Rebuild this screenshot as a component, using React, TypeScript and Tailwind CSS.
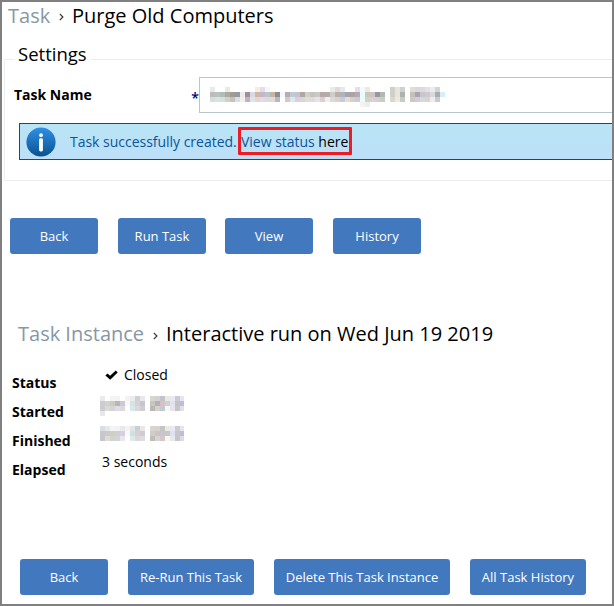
import type { ReactNode } from "react";

// Each row lists hex colours for consecutive 5px cells; "." is an empty cell.
const nameRows = [
  "e6ebea . . e8eae6 . . . . . f8ecdf e4dde8 f0f8fa . . . . . . . . . . . . e8ebe8 dcdcda e6eae8 . . eedce4 f2fcff e8ebe0 . . . . d0d0c8 e6e6e0 cfcfd4 . e0deda d8dad8 dcdae0 e4e2e0 ecebf0 d4d4d8",
  "bcbcbc b8c4b8 b0bcb8 aeaaa0 a09c94 949aa4 f0eaea 9c90a0 dcd8e0 ccb8a4 c4b8c8 b4c8d0 c8b4a0 8c8c92 f0faff bca8b0 b8ccd4 ccc0d0 b0a8a0 d0d0c4 c4c4bc c8c8c8 b8a8ac b0acb0 d0cccc c0b0a4 acb4c4 a8a4ac a8a4a8 b8a8b0 e8fcff c8ccac d0c0d0 989c90 b0b8b8 . d0d0c8 e8e4d8 a8b4b0 . c4c0bc a8a4b0 c8c4d0 d0c8c4 d8d8e0 a8b0a4 d8ecff",
  "d4dedc d6e4e2 d6e0de d0d0c8 c4c4be d8e0e2 f4f0e8 bcb4c0 e0e4e4 e0d8cc e8d8e4 dedad8 dedcd8 b8b8bc . d4c8cc dce8ea d8d0dc d4d8dc e0ded4 dcdce0 e4e4e0 d8d0d4 f0f0e8 e0d8d8 dcd0cc c8ccd8 e8dcd0 d4d0d0 cccacc e8fcff d0d4b8 dcd0d8 d0d4c8 c8ccc8 . d8d8d0 eeeae0 c4ccc8 . ccc8c4 d4ccd4 d0dcd4 e0d0d0 eeeef2 c8ccc8",
  ". . . . . . . . . . . . . . . . . . . . . . . . . . . . . . f6f2f0 eaeef0",
];
const startedRows = [
  "e8eaee . f4f4f4 f0f4f4 . f8f2ee e8eef0 d0d0d2 e8e8ea . d8d4ce d4d2d0 c4c4c8 e8ecdc e8e8f6 cccccc e4e4f2",
  "cccdd2 d0d2ce ccccba b4b8b6 ccc8d4 f6faf8 d4e4e4 d8d0d4 c8c4d0 . c8c4c0 b4b0b8 d8c0c4 d0d0dc e4e4e8 c4c0cc c4bcd4",
  "cccccc d8dcd2 d4d4d8 e0dce0 dcd8e0 . d8e8e8 dcd8d4 d0ccd4 . b8b8b4 d4d0cc c8c8d4 f4fcf0 e8e4ec c8c4c8 e0e0e8",
  "e8e8e8",
];
const finishedRows = [
  "dcdce4 e8e8e8 f2f6f6 f2f2f0 e8e8f2 f8f2ea dce8e8 d0ccd0 e8e8ec . d8d4ce d8d2d0 c4c4c8 e8ecdc e8e8f6 cccccc e4e4f2",
  "c8c8ca c8ccd0 d0d0c2 d0d0d2 d8d0e0 f6faf8 d0e0e2 d8d0d4 d0ccd4 . d0ccc8 c8c4c8 c8c4d0 c8c8c8 e0e0f0 c8c4d0 c4bcd4",
  "c4c8cc e4dcd4 d0d4d2 d4d4d2 ece4ee . dceae8 dcd8d4 e0dce4 . c0bcbc d8d4d0 d4c8c8 f4fcf0 e8e8f0 c8c4c8 dcdce4",
];

function Mosaic({ rows, width, className = "" }: { rows: string[]; width: number; className?: string }) {
  return (
    <svg width={width} height={rows.length * 5} className={`shrink-0 ${className}`} shapeRendering="crispEdges" aria-hidden="true">
      {rows.flatMap((row, y) =>
        row.split(" ").map((c, x) => (c === "." ? null : <rect key={`${x}-${y}`} x={x * 5} y={y * 5} width="5" height="5" fill={`#${c}`} />)),
      )}
    </svg>
  );
}

function Button({ children, className }: { children: ReactNode; className: string }) {
  return (
    <button className={`h-9 shrink-0 rounded-[3px] bg-[#4278be] pt-[2px] text-[13px] whitespace-nowrap text-white ${className}`}>{children}</button>
  );
}

function Chevron({ className = "" }: { className?: string }) {
  return (
    <svg width="5" height="8" viewBox="0 0 5 8" fill="none" stroke="#333" strokeWidth="1.2" className={`shrink-0 ${className}`}>
      <path d="M.8.8 3.9 4 .8 7.2" />
    </svg>
  );
}

function InfoIcon() {
  return (
    <svg width="30" height="30" viewBox="0 0 30 30" className="shrink-0">
      <defs>
        <linearGradient id="info" x1="0" y1="0" x2="0" y2="1">
          <stop offset="0" stopColor="#318fe6" />
          <stop offset="1" stopColor="#07528f" />
        </linearGradient>
      </defs>
      <circle cx="15" cy="15" r="14.6" fill="url(#info)" />
      <circle cx="15" cy="8.2" r="1.9" fill="#fff" />
      <rect x="13.1" y="11.3" width="3.8" height="13.2" rx="1.4" fill="#fff" />
    </svg>
  );
}

function Row({ label, children }: { label: string; children: ReactNode }) {
  return (
    <div className="flex h-[29px] items-start">
      <dt className="w-[88px] pt-[9px] text-[14px] leading-[20px] font-bold">{label}</dt>
      <dd className="flex items-start">{children}</dd>
    </div>
  );
}

export default function App() {
  return (
    <main className="h-[606px] w-[614px] overflow-hidden border-2 border-[#808080] bg-white font-['Open_Sans',sans-serif] text-black">
      <h1 className="flex h-7 items-center pl-[6px] text-[20px] leading-7 whitespace-nowrap">
        <span className="w-[43px] text-[#8797a4]">Task</span>
        <Chevron className="mt-[2px] mr-[8px] ml-[8px]" />
        <span>Purge Old Computers</span>
      </h1>

      <fieldset className="ml-[2px] h-[140px] w-[620px] pt-[11px]">
        <div className="flex h-[36px] items-start">
          <div className="mt-[18px] h-[18px] w-[10px] border-t border-l border-[#ebedf0]" />
          <div className="w-[77px] pl-1 text-[18.5px] leading-[26px]">Settings</div>
          <div className="mt-[18px] h-px flex-1 bg-[#ebebed]" />
        </div>
        <div className="h-[104px] border-b border-l border-[#ebedf0]">
          <div className="flex h-[36px]">
            <div className="flex w-[194px] justify-between pt-[8px] pl-[9px] text-[14px] leading-5 font-bold">
              <span>Task Name</span>
              <span className="pt-[3px] font-semibold text-[#000080]">*</span>
            </div>
            <div className="h-9 flex-1 border border-[#b9c6d1] pt-[9px] pl-[10px]">
              <Mosaic rows={nameRows} width={235} />
            </div>
          </div>
          <div className="mt-[10px] ml-[14px] flex h-[37px] items-center border border-[#005096] bg-linear-to-b from-[#b9e5f5] to-[#bddff8] pl-[6px] text-[14px] whitespace-nowrap text-[#0b549b]">
            <InfoIcon />
            <span className="ml-[14px] w-[168px] tracking-[-0.02px]">Task successfully created.</span>
            <span className="mb-px flex h-[28px] w-[114px] items-center rounded-[1px] border-[3px] border-[#ed1c24] pt-px tracking-[-0.02px]">
              View status&nbsp;<span className="text-black">here</span>
            </span>
          </div>
        </div>
      </fieldset>

      <nav className="mt-[48px] flex pl-2">
        <Button className="w-[88px]">Back</Button>
        <Button className="ml-5 w-[88px]">Run Task</Button>
        <Button className="ml-[19px] w-[88px]">View</Button>
        <Button className="ml-5 w-[88px]">History</Button>
      </nav>

      <h2 className="mt-[66px] flex h-7 items-center pl-4 text-[20px] leading-7 whitespace-nowrap">
        <span className="w-[127px] text-[#8797a4]">Task Instance</span>
        <Chevron className="mt-[3px] mr-[8px] ml-[8px]" />
        <span>Interactive run on Wed Jun 19 2019</span>
      </h2>

      <dl className="mt-[16px] pl-[10px]">
        <Row label="Status">
          <svg width="13" height="10" viewBox="0 0 13 10" className="mt-[6px] ml-[5px]">
            <path d="M.4 5.5 2.5 3.4 5.1 5.8 10.8.6 12.7 2.4 5.2 9.7Z" fill="#000" />
          </svg>
          <span className="ml-[6px] pt-px text-[14px] leading-5">Closed</span>
        </Row>
        <Row label="Started">
          <Mosaic rows={startedRows} width={84} className="mt-[3px]" />
        </Row>
        <Row label="Finished">
          <Mosaic rows={finishedRows} width={84} className="mt-[4px]" />
        </Row>
        <Row label="Elapsed">
          <span className="ml-[2px] pt-px text-[14px] leading-5">3 seconds</span>
        </Row>
      </dl>

      <nav className="mt-[79px] flex pl-[18px]">
        <Button className="w-[88px]">Back</Button>
        <Button className="ml-5 w-[126px]">Re-Run This Task</Button>
        <Button className="ml-5 w-[176px]">Delete This Task Instance</Button>
        <Button className="ml-5 w-[116px]">All Task History</Button>
      </nav>
    </main>
  );
}
